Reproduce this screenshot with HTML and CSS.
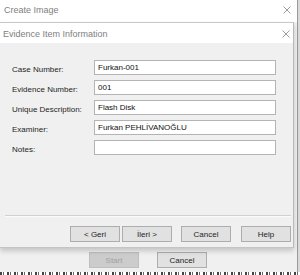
FILE: index.html
```html
<!DOCTYPE html>
<html lang="en">
<head>
  <meta charset="UTF-8">
  <title>Create Image</title>
  <link rel="stylesheet" href="styles.css">
</head>
<body>
  <div class="desk">
    <div class="outer">
      <div class="outer-title">
        <span class="title-text">Create Image</span>
        <svg class="close" width="8" height="8" viewBox="0 0 8 8"><path d="M0.5 0.5L7.5 7.5M7.5 0.5L0.5 7.5"/></svg>
      </div>

      <div class="dialog">
        <div class="dialog-title">
          <span class="title-text">Evidence Item Information</span>
          <svg class="close" width="8" height="8" viewBox="0 0 8 8"><path d="M0.5 0.5L7.5 7.5M7.5 0.5L0.5 7.5"/></svg>
        </div>
        <div class="dialog-body">
          <div class="form">
            <div class="row">
              <label>Case Number:</label>
              <div class="field">Furkan-001</div>
            </div>
            <div class="row">
              <label>Evidence Number:</label>
              <div class="field">001</div>
            </div>
            <div class="row">
              <label>Unique Description:</label>
              <div class="field">Flash Disk</div>
            </div>
            <div class="row">
              <label>Examiner:</label>
              <div class="field">Furkan PEHLİVANOĞLU</div>
            </div>
            <div class="row">
              <label>Notes:</label>
              <div class="field"></div>
            </div>
          </div>
          <div class="separator"></div>
          <div class="buttons">
            <button class="btn">&lt; Geri</button>
            <button class="btn next">İleri &gt;</button>
            <button class="btn cancel">Cancel</button>
            <button class="btn help">Help</button>
          </div>
        </div>
      </div>

      <div class="outer-buttons">
        <button class="btn" disabled>Start</button>
        <button class="btn">Cancel</button>
      </div>
    </div>
    <div class="side"></div>
  </div>
  <div class="taskline"></div>
</body>
</html>
```

FILE: styles.css
```css
body {
  margin: 0;
  width: 300px;
  height: 275px;
  overflow: hidden;
  background: #ffffff;
  font-family: "Liberation Sans", Arial, sans-serif;
  font-size: 8px;
  color: #1e1e1e;
}
.desk {
  display: flex;
  height: 272px;
}
.outer {
  width: 297px;
  height: 272px;
  background: #f0f0f0;
  display: flex;
  flex-direction: column;
}
.side {
  flex: 1;
  background: #d9d9d9;
  border-left: 1px solid #9a9a9a;
}
.outer-title {
  height: 22px;
  background: #ffffff;
  display: flex;
  align-items: center;
  justify-content: space-between;
  padding: 0 6px 2px 4px;
  box-sizing: border-box;
}
.title-text {
  font-size: 9px;
  color: #808080;
}
.close {
  stroke: #9c9c9c;
  stroke-width: 1;
  fill: none;
}
.dialog {
  width: 294px;
  height: 226px;
  box-sizing: border-box;
  border-top: 1px solid #c8c8c8;
  border-right: 1px solid #b9b9b9;
  border-bottom: 1px solid #c4c4c4;
  background: #f0f0f0;
  display: flex;
  flex-direction: column;
  box-shadow: 0 3px 5px rgba(0, 0, 0, 0.18);
  position: relative;
  z-index: 1;
}
.dialog-title {
  height: 20px;
  background: #ffffff;
  display: flex;
  align-items: center;
  justify-content: space-between;
  padding: 1px 3px 0 3px;
  box-sizing: border-box;
}
.dialog-body {
  flex: 1;
  display: flex;
  flex-direction: column;
  padding: 17px 2px 5px 5px;
}
.form {
  display: flex;
  flex-direction: column;
  gap: 5px;
  flex: 1;
}
.row {
  display: flex;
  align-items: center;
  height: 15px;
}
.row label {
  width: 82px;
  padding-left: 7px;
  padding-top: 4px;
}
.field {
  width: 182px;
  height: 15px;
  box-sizing: border-box;
  background: #ffffff;
  border: 1px solid #b4b4b4;
  padding: 2px 3px 0;
  line-height: 10px;
  color: #111;
}
.separator {
  height: 1px;
  background: #d0d0d0;
  border-bottom: 1px solid #fbfbfb;
  margin-bottom: 9px;
}
.buttons {
  display: flex;
  justify-content: flex-end;
  gap: 2px;
}
.btn {
  width: 50px;
  height: 16px;
  box-sizing: border-box;
  background: #e1e1e1;
  border: 1px solid #adadad;
  font-family: "Liberation Sans", Arial, sans-serif;
  font-size: 8px;
  color: #1e1e1e;
  padding: 0;
}
.btn.cancel {
  margin-left: 7px;
}
.btn.help {
  margin-left: 8px;
}
.btn:disabled {
  background: #cccccc;
  border-color: #bfbfbf;
  color: #a0a0a0;
}
.outer-buttons {
  display: flex;
  gap: 18px;
  padding: 4px 0 0 89px;
}
.taskline {
  height: 3px;
  background: repeating-linear-gradient(90deg, #444 0 2px, #fff 2px 3px, #666 3px 4px, #fff 4px 7px);
}
```
